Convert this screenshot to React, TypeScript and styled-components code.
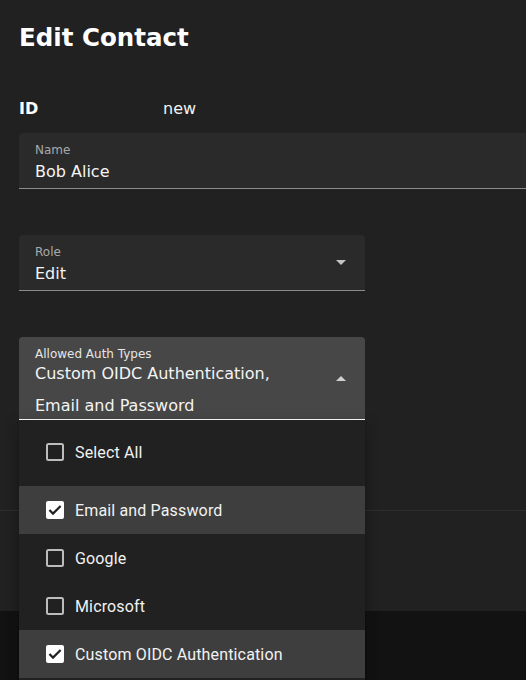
import React from "react";
import styled, { createGlobalStyle } from "styled-components";

const Global = createGlobalStyle`
  html, body {
    margin: 0;
    padding: 0;
    background: #121212;
  }
  body {
    font-family: "DejaVu Sans", "Noto Sans", sans-serif;
    color: #ffffff;
  }
`;

const Page = styled.div`
  height: 100vh;
  overflow: hidden;
  display: flex;
  flex-direction: column;
  background: #121212;
`;

const Card = styled.div`
  flex: none;
  width: 100%;
  background: #212121;
  display: flex;
  flex-direction: column;
`;

const Content = styled.div`
  display: flex;
  flex-direction: column;
  padding: 22px 0 89px 19px;
`;

const Title = styled.h1`
  margin: 0;
  font-size: 24.5px;
  line-height: 32px;
  font-weight: 700;
  color: #ffffff;
`;

const InfoRow = styled.div`
  display: grid;
  grid-template-columns: 144px auto;
  margin-top: 43px;
  font-size: 16px;
  line-height: 24px;
`;

const InfoLabel = styled.span`
  font-weight: 700;
`;

const InfoValue = styled.span`
  color: #f2f2f2;
`;

const FieldWrap = styled.div<{ $width: number; $gap: number }>`
  position: relative;
  width: ${(p) => p.$width}px;
  margin-top: ${(p) => p.$gap}px;
`;

const Field = styled.div<{ $focused?: boolean }>`
  display: flex;
  align-items: center;
  box-sizing: border-box;
  padding: 0 19px 0 16px;
  background: ${(p) => (p.$focused ? "#474747" : "#2a2a2a")};
  border-radius: 4px 4px 0 0;
  border-bottom: ${(p) => (p.$focused ? "2px solid #ffffff" : "1px solid #8c8c8c")};
`;

const FieldBody = styled.div`
  flex: 1;
  display: flex;
  flex-direction: column;
  padding-top: 9px;
`;

const Label = styled.div<{ $focused?: boolean }>`
  font-size: 12px;
  line-height: 16px;
  color: ${(p) => (p.$focused ? "#e6e6e6" : "#a9a9a9")};
`;

const Value = styled.div`
  font-size: 16px;
  line-height: 24px;
  margin-top: 2px;
  padding-bottom: 4px;
  color: #f4f4f4;
`;

const MultiValue = styled.div`
  font-size: 16px;
  line-height: 32px;
  margin-top: -4px;
  margin-bottom: -3px;
  color: #f4f4f4;
`;

const Line = styled.span`
  display: block;
`;

const Arrow = styled.svg`
  width: 10px;
  height: 5px;
  flex: none;
`;

const Menu = styled.div`
  position: absolute;
  left: 0;
  top: calc(100% - 1px);
  width: 100%;
  background: #212121;
  box-shadow: 0 5px 5px -3px rgba(0, 0, 0, 0.2), 0 8px 10px 1px rgba(0, 0, 0, 0.14),
    0 3px 14px 2px rgba(0, 0, 0, 0.12);
  padding: 8px 0;
  z-index: 10;
`;

const Item = styled.div<{ $selected?: boolean; $spaced?: boolean }>`
  display: flex;
  align-items: center;
  gap: 11px;
  height: 48px;
  padding-left: 27px;
  margin-bottom: ${(p) => (p.$spaced ? 10 : 0)}px;
  background: ${(p) => (p.$selected ? "#3e3e3e" : "transparent")};
  font-family: Roboto, "Noto Sans", sans-serif;
  font-size: 16px;
  letter-spacing: 0.15px;
  color: #f2f2f2;
`;

const Divider = styled.div`
  height: 1px;
  background: #2e2e2e;
`;

const Actions = styled.div`
  height: 100px;
`;

function CheckBox({ checked }: { checked: boolean }) {
  return checked ? (
    <svg width="18" height="18" viewBox="0 0 18 18">
      <rect x="0" y="0" width="18" height="18" rx="2" fill="#ffffff" />
      <path d="M3.4 9 L7 12.6 L14.6 5" fill="none" stroke="#212121" strokeWidth="2.2" />
    </svg>
  ) : (
    <svg width="18" height="18" viewBox="0 0 18 18">
      <rect x="1" y="1" width="16" height="16" rx="1.5" fill="none" stroke="#bdbdbd" strokeWidth="2" />
    </svg>
  );
}

const options = [
  { label: "Email and Password", checked: true },
  { label: "Google", checked: false },
  { label: "Microsoft", checked: false },
  { label: "Custom OIDC Authentication", checked: true },
];

export default function App() {
  return (
    <>
      <Global />
      <Page>
        <Card>
          <Content>
            <Title>Edit Contact</Title>
            <InfoRow>
              <InfoLabel>ID</InfoLabel>
              <InfoValue>new</InfoValue>
            </InfoRow>
            <FieldWrap $width={620} $gap={12}>
              <Field>
                <FieldBody>
                  <Label>Name</Label>
                  <Value>Bob Alice</Value>
                </FieldBody>
              </Field>
            </FieldWrap>
            <FieldWrap $width={346} $gap={46}>
              <Field>
                <FieldBody>
                  <Label>Role</Label>
                  <Value>Edit</Value>
                </FieldBody>
                <Arrow viewBox="0 0 10 5">
                  <path d="M0 0 L10 0 L5 5 Z" fill="#c4c4c4" />
                </Arrow>
              </Field>
            </FieldWrap>
            <FieldWrap $width={346} $gap={46}>
              <Field $focused>
                <FieldBody>
                  <Label $focused>Allowed Auth Types</Label>
                  <MultiValue>
                    <Line>Custom OIDC Authentication,</Line>
                    <Line>Email and Password</Line>
                  </MultiValue>
                </FieldBody>
                <Arrow viewBox="0 0 10 5">
                  <path d="M0 5 L10 5 L5 0 Z" fill="#d0d0d0" />
                </Arrow>
              </Field>
              <Menu>
                <Item $spaced>
                  <CheckBox checked={false} />
                  <span>Select All</span>
                </Item>
                {options.map((o) => (
                  <Item key={o.label} $selected={o.checked}>
                    <CheckBox checked={o.checked} />
                    <span>{o.label}</span>
                  </Item>
                ))}
              </Menu>
            </FieldWrap>
          </Content>
          <Divider />
          <Actions />
        </Card>
      </Page>
    </>
  );
}
